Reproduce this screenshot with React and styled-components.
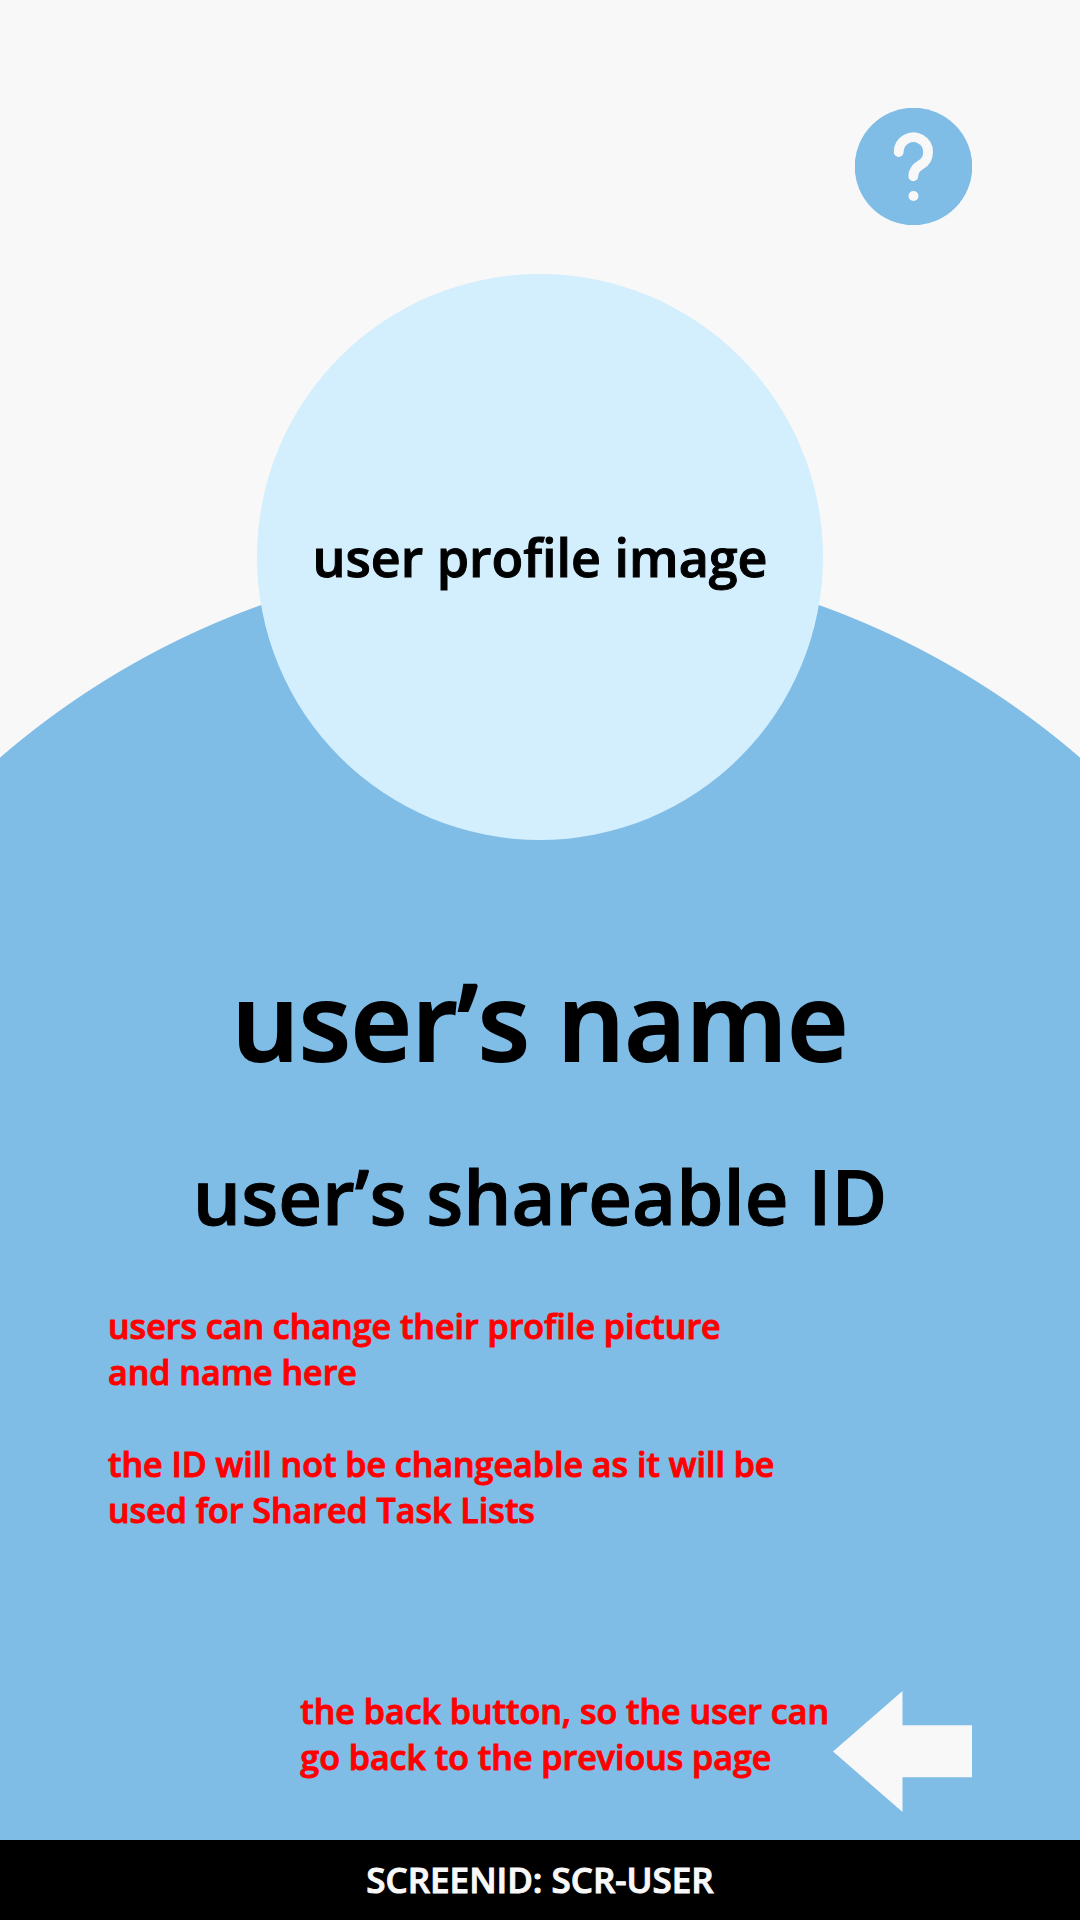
import React from "react";
import styled, { createGlobalStyle } from "styled-components";

const GlobalStyle = createGlobalStyle`
  *, *::before, *::after { box-sizing: border-box; }
  body {
    margin: 0;
    background: #f8f8f8;
    color: #000;
    font-family: "Open Sans", "Noto Sans", sans-serif;
    font-weight: 600;
    -webkit-text-stroke: 1px currentColor;
  }
  h1, h2, p { margin: 0; font-weight: inherit; }
`;

const Page = styled.div`
  min-height: 100vh;
  display: flex;
  flex-direction: column;
  background: radial-gradient(circle at 50% 1382px, #7fbce6 825px, #f8f8f8 826px);
`;

const Header = styled.header`
  display: flex;
  justify-content: flex-end;
  padding: 108px 108px 49px;
`;

const IconButton = styled.button`
  display: block;
  flex: none;
  padding: 0;
  border: 0;
  background: none;
  cursor: pointer;

  svg { display: block; }
`;

const BackButton = styled(IconButton)`
  margin-top: 3px;
`;

const Profile = styled.main`
  flex: 1;
  display: flex;
  flex-direction: column;
  padding: 0 108px 28px;
`;

const Avatar = styled.div`
  align-self: center;
  display: grid;
  place-items: center;
  width: 566px;
  aspect-ratio: 1;
  border-radius: 50%;
  background: #d3eefd;
  font-size: 52px;
  line-height: 72px;
`;

const Name = styled.h1`
  margin-top: 108px;
  text-align: center;
  font-size: 106px;
  line-height: 144px;
  -webkit-text-stroke-width: 2px;
`;

const ShareId = styled.h2`
  margin-top: 52px;
  text-align: center;
  font-size: 76px;
  line-height: 104px;
`;

const Notes = styled.section`
  display: flex;
  flex-direction: column;
  gap: 46px;
  margin-top: 55px;
`;

const Note = styled.p`
  color: #ff0000;
  font-size: 34px;
  line-height: 46px;
`;

const BackRow = styled.div`
  display: flex;
  justify-content: flex-end;
  align-items: flex-start;
  gap: 4px;
  margin-top: auto;
`;

const Footer = styled.footer`
  padding: 16px;
  background: #000;
  color: #f8f8f8;
  text-align: center;
  font-size: 35px;
  line-height: 48px;
`;

function HelpIcon() {
  return (
    <svg width="117" height="117" viewBox="0 0 117 117" fill="none" aria-hidden="true">
      <circle cx="58.5" cy="58.5" r="58.8" fill="#7fbce6" />
      <path
        d="M43.7 44A14.7 14.7 0 1 1 65.8 56.7C61.2 59.4 58.3 63.6 58.3 68.3"
        stroke="#f8f8f8"
        strokeWidth="9.8"
        strokeLinecap="round"
        strokeLinejoin="round"
      />
      <circle cx="58.5" cy="88" r="5" fill="#f8f8f8" />
    </svg>
  );
}

function BackIcon() {
  return (
    <svg width="139" height="121" viewBox="0 0 139 121" aria-hidden="true">
      <path d="M0 60.5L69.5 0V34.3H139V86.3H69.5V121Z" fill="#f8f8f8" />
    </svg>
  );
}

export default function App() {
  return (
    <>
      <GlobalStyle />
      <Page>
        <Header>
          <IconButton type="button" aria-label="Help">
            <HelpIcon />
          </IconButton>
        </Header>
        <Profile>
          <Avatar>user profile image</Avatar>
          <Name>user’s name</Name>
          <ShareId>user’s shareable ID</ShareId>
          <Notes>
            <Note>
              users can change their profile picture
              <br />
              and name here
            </Note>
            <Note>
              the ID will not be changeable as it will be
              <br />
              used for Shared Task Lists
            </Note>
          </Notes>
          <BackRow>
            <Note>
              the back button, so the user can
              <br />
              go back to the previous page
            </Note>
            <BackButton type="button" aria-label="Back">
              <BackIcon />
            </BackButton>
          </BackRow>
        </Profile>
        <Footer>SCREENID: SCR-USER</Footer>
      </Page>
    </>
  );
}
